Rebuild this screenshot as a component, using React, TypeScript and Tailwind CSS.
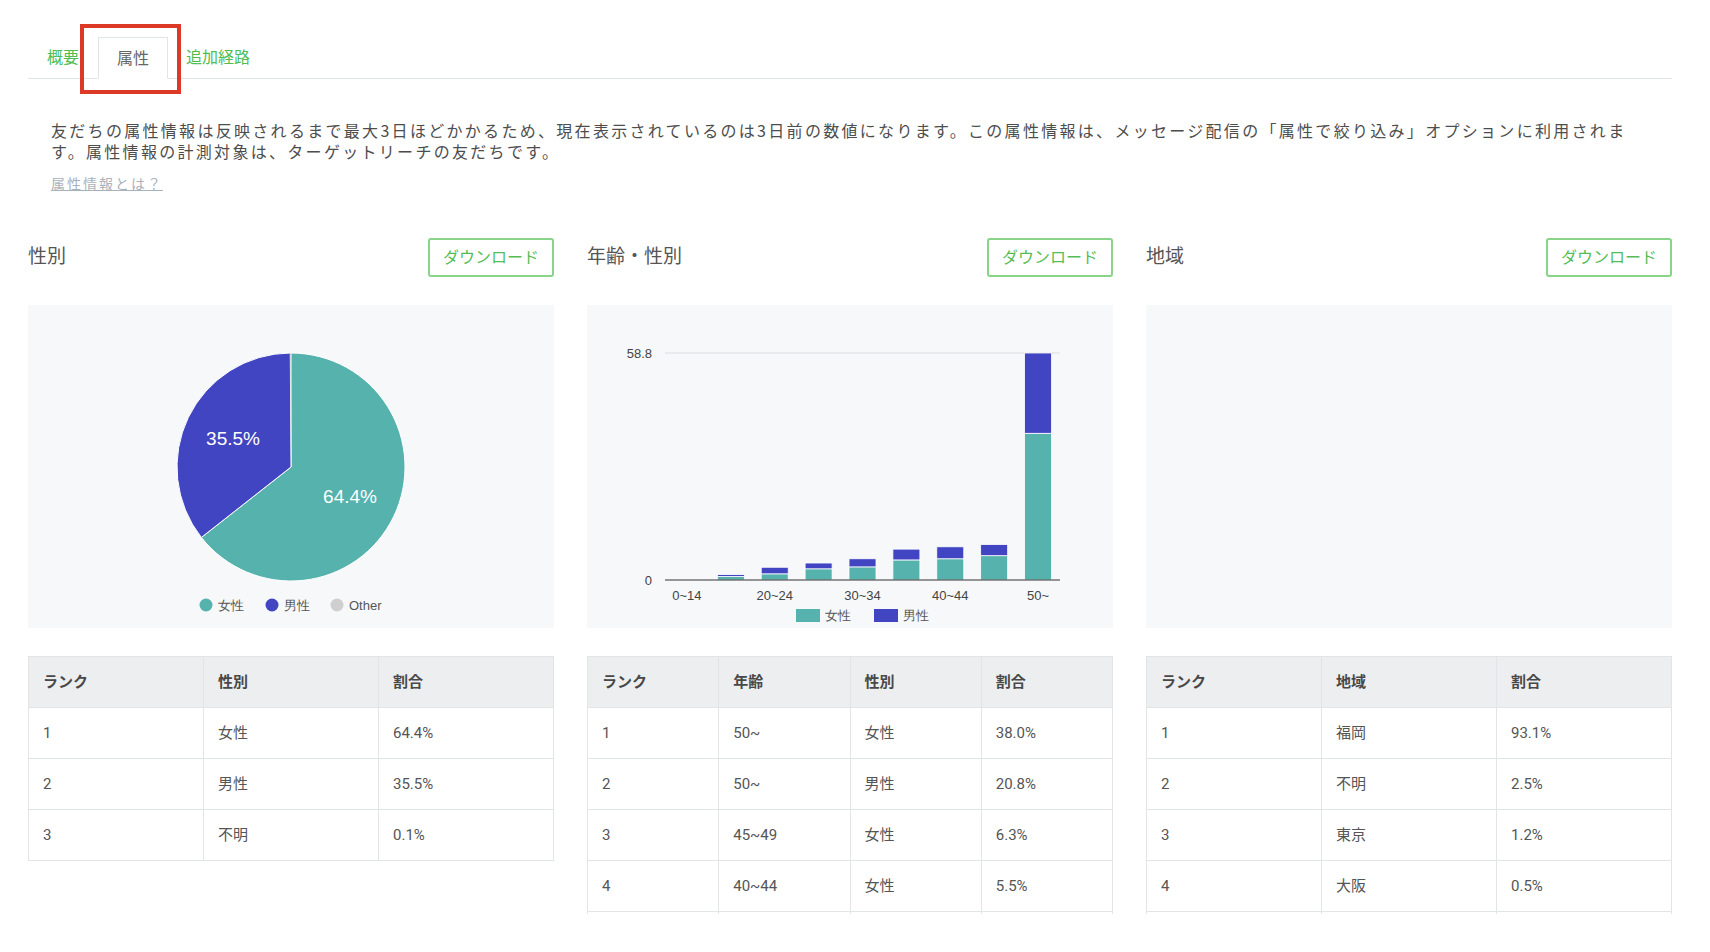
import React from "react";

const TEAL = "#55b2ad";
const BLUE = "#4245c2";

const ageBars = [
  { label: "0~14", f: 0.15, m: 0.05 },
  { label: "", f: 0.9, m: 0.5 },
  { label: "20~24", f: 1.6, m: 1.7 },
  { label: "", f: 2.9, m: 1.5 },
  { label: "30~34", f: 3.4, m: 2.1 },
  { label: "", f: 5.2, m: 2.8 },
  { label: "40~44", f: 5.5, m: 3.1 },
  { label: "", f: 6.3, m: 2.9 },
  { label: "50~", f: 38.0, m: 20.8 },
];

function polar(cx: number, cy: number, r: number, frac: number) {
  const a = frac * Math.PI * 2;
  return [cx + r * Math.sin(a), cy - r * Math.cos(a)];
}

function slice(cx: number, cy: number, r: number, from: number, to: number) {
  const [x1, y1] = polar(cx, cy, r, from);
  const [x2, y2] = polar(cx, cy, r, to);
  const large = to - from > 0.5 ? 1 : 0;
  return `M${cx} ${cy} L${x1} ${y1} A${r} ${r} 0 ${large} 1 ${x2} ${y2} Z`;
}

function PieChart() {
  const cx = 263;
  const cy = 162;
  const r = 114;
  return (
    <svg width="526" height="323" className="font-['Liberation_Sans',Arial,sans-serif]">
      <path d={slice(cx, cy, r, 0, 0.644)} fill={TEAL} stroke="#fff" strokeWidth="1" />
      <path d={slice(cx, cy, r, 0.644, 0.999)} fill={BLUE} stroke="#fff" strokeWidth="1" />
      <path d={slice(cx, cy, r, 0.999, 1)} fill="#cfcfcf" />
      <text x="322" y="198" textAnchor="middle" fill="#fff" fontSize="19">64.4%</text>
      <text x="205" y="140" textAnchor="middle" fill="#fff" fontSize="19">35.5%</text>
      <circle cx="178" cy="300" r="6.5" fill={TEAL} />
      <text x="190" y="305" fontSize="13" fill="#555">女性</text>
      <circle cx="244" cy="300" r="6.5" fill={BLUE} />
      <text x="256" y="305" fontSize="13" fill="#555">男性</text>
      <circle cx="309" cy="300" r="6.5" fill="#cfcfcf" />
      <text x="321" y="305" fontSize="13" fill="#555">Other</text>
    </svg>
  );
}

function BarChart() {
  const left = 78;
  const width = 395;
  const top = 48;
  const base = 275;
  const max = 58.8;
  const band = width / ageBars.length;
  const bw = 27;
  const scale = (v: number) => ((base - top) * v) / max;
  return (
    <svg width="526" height="323" className="font-['Liberation_Sans',Arial,sans-serif]">
      <line x1={left} x2={left + width} y1={top} y2={top} stroke="#d9dce0" />
      <text x="65" y={top + 4.5} textAnchor="end" fontSize="13" fill="#444">58.8</text>
      <text x="65" y={base + 4.5} textAnchor="end" fontSize="13" fill="#444">0</text>
      {ageBars.map((b, i) => {
        const x = left + band * i + (band - bw) / 2;
        const fh = scale(b.f);
        const mh = scale(b.m);
        return (
          <g key={i}>
            <rect x={x} y={base - fh} width={bw} height={fh} fill={TEAL} stroke="#fff" strokeWidth="0.8" />
            <rect x={x} y={base - fh - mh} width={bw} height={mh} fill={BLUE} stroke="#fff" strokeWidth="0.8" />
            {b.label && (
              <text x={left + band * i + band / 2} y="295" textAnchor="middle" fontSize="13" fill="#444">
                {b.label}
              </text>
            )}
          </g>
        );
      })}
      <line x1={left} x2={left + width} y1={base} y2={base} stroke="#333" />
      <rect x="209" y="304" width="24" height="13" fill={TEAL} />
      <text x="238" y="315" fontSize="13" fill="#555">女性</text>
      <rect x="287" y="304" width="24" height="13" fill={BLUE} />
      <text x="316" y="315" fontSize="13" fill="#555">男性</text>
    </svg>
  );
}

function DataTable({ head, rows, clip }: { head: string[]; rows: string[][]; clip?: boolean }) {
  return (
    <div className={clip ? "mt-[28px] h-[258px] overflow-hidden" : "mt-[28px]"}>
      <table className="w-full table-fixed border-collapse text-[15px]">
        <thead>
          <tr className="bg-[#eceef0]">
            {head.map((h) => (
              <th key={h} className="h-[51px] border border-[#e2e5e8] px-[14px] text-left font-bold text-[#484848]">
                {h}
              </th>
            ))}
          </tr>
        </thead>
        <tbody>
          {rows.map((r, i) => (
            <tr key={i}>
              {r.map((c, j) => (
                <td key={j} className="h-[51px] border border-[#e2e5e8] px-[14px] text-[#555]">
                  {c}
                </td>
              ))}
            </tr>
          ))}
          {clip && (
            <tr>
              {head.map((h) => (
                <td key={h} className="h-[51px] border border-[#e2e5e8]" />
              ))}
            </tr>
          )}
        </tbody>
      </table>
    </div>
  );
}

function Section({ title, children }: { title: string; children: React.ReactNode }) {
  return (
    <div className="flex h-[39px] items-center justify-between">
      <h2 className="text-[19px] text-[#555]">{title}</h2>
      {children}
    </div>
  );
}

function DownloadButton() {
  return (
    <button className="h-[39px] w-[126px] rounded-[3px] border-2 border-[#88d488] bg-white text-[16px] text-[#56bd56]">
      ダウンロード
    </button>
  );
}

export default function App() {
  return (
    <div className="min-h-screen bg-white font-['Roboto','Noto_Sans_CJK_JP',sans-serif] text-[#555]">
      <div className="ml-[28px] w-[1644px] pt-[37px] pb-10">
        {/* Tabs */}
        <div className="relative flex h-[42px] border-b border-[#e1e4e8] font-['Noto_Sans_CJK_JP',sans-serif] text-[16px]">
          <div className="flex items-center px-[19px] pb-[3px] text-[#4fbd4f]">概要</div>
          <div className="-mb-px flex items-center border border-[#e1e4e8] border-b-white bg-white px-[18px] pb-[3px] text-[#666]">
            属性
          </div>
          <div className="flex items-center px-[18px] pb-[3px] text-[#4fbd4f]">追加経路</div>
          <div className="absolute left-[52px] top-[-13px] h-[70px] w-[101px] border-4 border-[#dc3a26]" />
        </div>

        {/* Description */}
        <div className="mt-[41px] px-[23px] font-['Noto_Sans_CJK_JP',sans-serif]">
          <p className="w-[1590px] text-[16px] leading-[21px] tracking-[2.3px] text-[#4d4d4d]">
            友だちの属性情報は反映されるまで最大3日ほどかかるため、現在表示されているのは3日前の数値になります。この属性情報は、メッセージ配信の「属性で絞り込み」オプションに利用されます。属性情報の計測対象は、ターゲットリーチの友だちです。
          </p>
          <a className="mt-[11px] block w-fit text-[14px] leading-[20px] tracking-[2px] text-[#a9b1bb] underline">
            属性情報とは？
          </a>
        </div>

        {/* Charts */}
        <div className="mt-[45px] grid grid-cols-3 gap-[33px]">
          <div>
            <Section title="性別">
              <DownloadButton />
            </Section>
            <div className="mt-[28px] h-[323px] bg-[#f7f8fa]">
              <PieChart />
            </div>
            <DataTable
              head={["ランク", "性別", "割合"]}
              rows={[
                ["1", "女性", "64.4%"],
                ["2", "男性", "35.5%"],
                ["3", "不明", "0.1%"],
              ]}
            />
          </div>
          <div>
            <Section title="年齢・性別">
              <DownloadButton />
            </Section>
            <div className="mt-[28px] h-[323px] bg-[#f7f8fa]">
              <BarChart />
            </div>
            <DataTable
              clip
              head={["ランク", "年齢", "性別", "割合"]}
              rows={[
                ["1", "50~", "女性", "38.0%"],
                ["2", "50~", "男性", "20.8%"],
                ["3", "45~49", "女性", "6.3%"],
                ["4", "40~44", "女性", "5.5%"],
              ]}
            />
          </div>
          <div>
            <Section title="地域">
              <DownloadButton />
            </Section>
            <div className="mt-[28px] h-[323px] bg-[#f7f8fa]" />
            <DataTable
              clip
              head={["ランク", "地域", "割合"]}
              rows={[
                ["1", "福岡", "93.1%"],
                ["2", "不明", "2.5%"],
                ["3", "東京", "1.2%"],
                ["4", "大阪", "0.5%"],
              ]}
            />
          </div>
        </div>
      </div>
    </div>
  );
}
